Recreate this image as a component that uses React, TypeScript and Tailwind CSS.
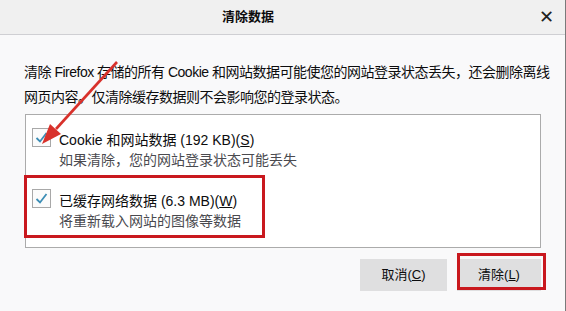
import React from 'react'

function CheckBox() {
  return (
    <div className="w-[19px] h-[19px] shrink-0 border border-[#a8a8a8] bg-[#fbfbfb] flex items-center justify-center">
      <svg width="15" height="15" viewBox="0 0 15 15">
        <path d="M2.5 8 L6 11.5 L12.5 3" fill="none" stroke="#3b8db5" strokeWidth="1.8" />
      </svg>
    </div>
  )
}

function Row({ label, hint }: { label: React.ReactNode; hint: string }) {
  return (
    <div className="flex">
      <CheckBox />
      <div className="ml-[8px] mt-[2px]">
        <div className="h-[20px] leading-[20px] text-[14px] text-[#0c0c0d]">{label}</div>
        <div className="h-[21px] leading-[21px] text-[14px] text-[#4a4a4f]">{hint}</div>
      </div>
    </div>
  )
}

export default function App() {
  return (
    <div
      className="w-[566px] h-[311px] relative overflow-hidden bg-[#f9f9fa] border-r border-[#7a7a7a] flex flex-col"
      style={{ fontFamily: '"Liberation Sans", "Noto Sans CJK SC", sans-serif' }}
    >
      {/* title bar */}
      <div className="h-[35px] shrink-0 bg-[#f0f0f0] border-b border-[#cfcfd3] flex items-center">
        <div className="pl-[222px] text-[13px] font-semibold text-[#0c0c0d]">清除数据</div>
        <div className="ml-auto mr-[11px] text-[18px] leading-none text-[#222]">✕</div>
      </div>

      <div className="px-[24px] pt-[25px]">
        <p className="text-[14px] leading-[25px] text-[#0c0c0d] whitespace-nowrap tracking-[-0.5px]">
          清除 Firefox 存储的所有 Cookie 和网站数据可能使您的网站登录状态丢失，还会删除离线
          <br />
          网页内容。仅清除缓存数据则不会影响您的登录状态。
        </p>

        <div className="mt-[4px] ml-[1px] w-[516px] h-[134px] bg-white border border-[#ababab] pl-[6px] pt-[13px] flex flex-col gap-[18px]">
          <Row
            label={<>Cookie 和网站数据 (192 KB)(<span className="underline">S</span>)</>}
            hint="如果清除，您的网站登录状态可能丢失"
          />
          <Row
            label={<>已缓存网络数据 (6.3 MB)(<span className="underline">W</span>)</>}
            hint="将重新载入网站的图像等数据"
          />
        </div>

        <div className="mt-[11px] flex justify-end gap-[10px]">
          <div className="w-[87px] h-[32px] bg-[#dfdfe0] flex items-center justify-center text-[13px] text-[#0c0c0d]">
            取消(<span className="underline">C</span>)
          </div>
          <div className="w-[84px] h-[32px] bg-[#dfdfe0] flex items-center justify-center text-[13px] text-[#0c0c0d]">
            清除(<span className="underline">L</span>)
          </div>
        </div>
      </div>

      {/* annotations */}
      <div className="absolute left-[24px] top-[175px] w-[241px] h-[63px] border-[3px] border-[#c9181e]" />
      <div className="absolute left-[457px] top-[253px] w-[89px] h-[37px] border-[3px] border-[#c9181e]" />
      <svg className="absolute left-0 top-0" width="566" height="311">
        <line x1="117" y1="62" x2="56" y2="129" stroke="#d8312b" strokeWidth="2.6" />
        <polygon points="42,144 61,134 50,124" fill="#d8312b" />
      </svg>
    </div>
  )
}
